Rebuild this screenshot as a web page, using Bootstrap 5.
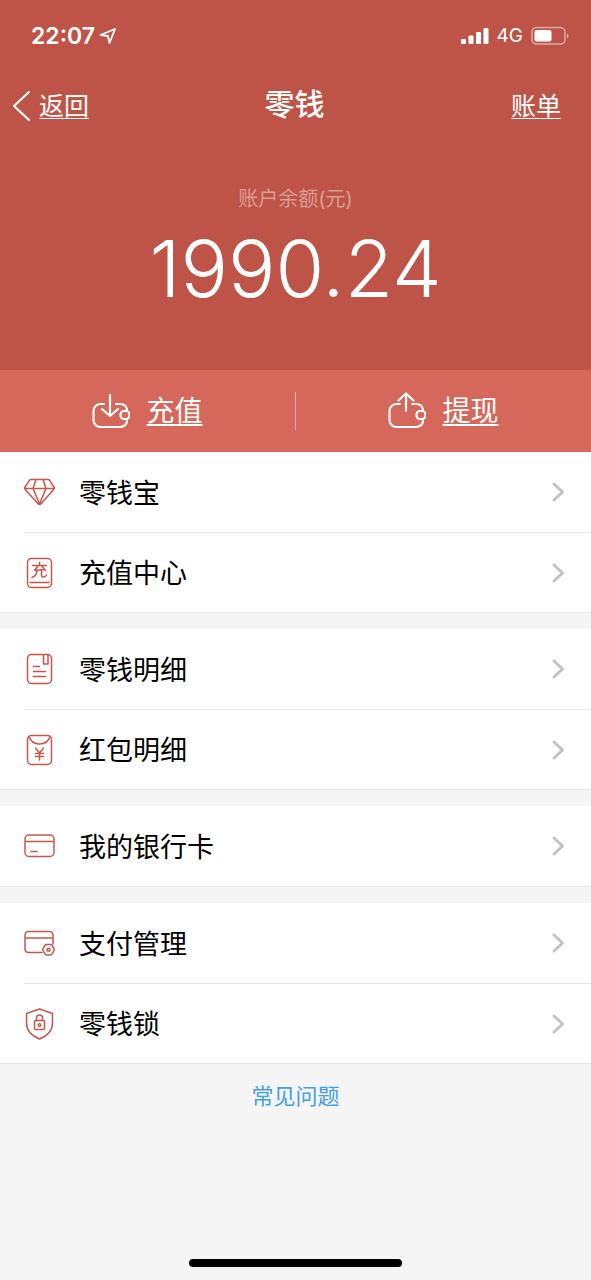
<!DOCTYPE html>
<html lang="zh-CN">
<head>
<meta charset="utf-8">
<meta name="viewport" content="width=device-width, initial-scale=1">
<title>零钱</title>
<link href="https://cdn.jsdelivr.net/npm/bootstrap@5.3.0/dist/css/bootstrap.min.css" rel="stylesheet">
<style>
  body { background: #f5f5f5; font-family: "Inter", "Noto Sans CJK SC", sans-serif; color: #000; }
  svg { fill: none; stroke: currentColor; stroke-linecap: round; stroke-linejoin: round; flex: none; display: block; }
  .hero { background: #bd5447; color: #fff; padding-bottom: 48px; }
  .status { height: 72px; padding: 0 22px 0 31px; }
  .clock { font-size: 23px; font-weight: 600; }
  .net { font-size: 19px; }
  .topbar { height: 64px; padding: 0 30px 0 12px; }
  .topbar a { font-size: 25px; line-height: 36px; }
  .topbar h1 { font-size: 30px; line-height: 36px; font-weight: 500; }
  .topbar .col { padding-top: 4px; }
  .under { text-decoration: underline; text-underline-offset: 3px; text-decoration-thickness: 1px; }
  .caption { font-size: 20px; line-height: 30px; color: #dd9c94; padding-top: 48px; }
  .amount { font-size: 79px; line-height: 108px; font-weight: 300; }
  .actions { background: #d5685a; height: 82px; }
  .actions a { font-size: 28px; line-height: 40px; }
  .actions .under { text-decoration-thickness: 2px; }
  .rule { width: 1px; height: 38px; background: #e9aaa1; }
  .entries { background: #fff; border-bottom: 1px solid #e6e6e6; }
  .entries + .entries { margin-top: 16px; }
  .entry { height: 80px; margin-left: 24px; padding-right: 26px; font-size: 27px; color: #000; }
  .entry + .entry { border-top: 1px solid #e6e6e6; }
  .entry span { padding-top: 4px; }
  .entry .glyph { color: #c9564a; margin-right: 23px; }
  .entry .next { color: #c2c2c2; }
  .faq { font-size: 22px; line-height: 32px; color: #479fe4; margin-top: 16px; }
  .homebar { width: 36%; height: 8px; background: #000; margin-bottom: 13px; }
</style>
</head>
<body class="min-vh-100 d-flex flex-column">
<header class="hero">
  <div class="status d-flex align-items-center justify-content-between">
    <div class="d-flex align-items-center gap-1">
      <span class="clock">22:07</span>
      <svg width="18" height="18" viewBox="0 0 18 18" stroke-width="1.800"><path d="M1.500 8 16 2 10.500 16 9 9Z"/></svg>
    </div>
    <div class="d-flex align-items-center gap-2">
      <svg width="28" height="18" viewBox="0 0 28 18"><g fill="currentColor" stroke="none"><rect x="0" y="12" width="5" height="5" rx="1"/><rect x="7.500" y="8.500" width="5" height="8.500" rx="1"/><rect x="15" y="5" width="5" height="12" rx="1"/><rect x="22.500" y="1" width="5" height="16" rx="1"/></g></svg>
      <span class="net">4G</span>
      <svg width="38" height="20" viewBox="0 0 38 20"><rect x="1" y="1.500" width="33" height="16.500" rx="4.500" stroke-opacity=".5" stroke-width="1.500"/><rect x="3.500" y="4" width="17" height="11.500" rx="2" fill="currentColor" stroke="none"/><path d="M36 7.500c2 1 2 4 0 5Z" fill="currentColor" stroke="none" opacity=".55"/></svg>
    </div>
  </div>
  <nav class="topbar row g-0 align-items-center" aria-label="导航">
    <div class="col">
      <a href="#" class="d-flex align-items-center gap-2 text-white text-decoration-none">
        <svg width="19" height="32" viewBox="0 0 19 32" stroke-width="2.200"><path d="M17 2 2 16l15 14"/></svg>
        <span class="under">返回</span>
      </a>
    </div>
    <h1 class="col-auto m-0 ps-3">零钱</h1>
    <div class="col text-end"><a href="#" class="under text-white">账单</a></div>
  </nav>
  <div class="caption text-center">账户余额(元)</div>
  <div class="amount text-center">1990.24</div>
</header>
<main>
  <div class="actions d-flex align-items-center">
    <a href="#" class="col d-flex align-items-center justify-content-center gap-3 text-white text-decoration-none">
      <svg width="38" height="38" viewBox="0 0 38 38" stroke-width="2.200"><path d="M12 12H8a7 7 0 0 0-6.500 7v9a7 7 0 0 0 7 7h19c4 0 7-2 7.500-6M24 12h4c4 0 6.500 2.500 7 6M18 3v20M10 17l8 7 8-7"/><rect x="28.500" y="19" width="9" height="8" rx="3.500"/></svg>
      <span class="under">充值</span>
    </a>
    <div class="rule"></div>
    <a href="#" class="col d-flex align-items-center justify-content-center gap-3 text-white text-decoration-none">
      <svg width="38" height="38" viewBox="0 0 38 38" stroke-width="2.200"><path d="M12 12H8a7 7 0 0 0-6.500 7v9a7 7 0 0 0 7 7h19c4 0 7-2 7.500-6M24 12h4c4 0 6.500 2.500 7 6M18 19V2M10.500 8.500 18 1.500l7.500 7"/><rect x="28.500" y="19" width="9" height="8" rx="3.500"/></svg>
      <span class="under">提现</span>
    </a>
  </div>

  <div class="entries">
    <a href="#" class="entry d-flex align-items-center text-decoration-none">
      <svg class="glyph" width="32" height="32" viewBox="0 0 32 32" stroke-width="1.500"><path d="M7 3.500h17q1 0 1.600.8L30 11q.8 1.200-.3 2.500L17 27.800q-1.500 1.400-3 0L1.300 13.500Q.2 12.200 1 11L5.400 4.300Q6 3.500 7 3.500ZM1 12.500h29M12 3.500 9 12.500l6.500 15.500L22 12.500l-3-9"/></svg>
      <span>零钱宝</span>
      <svg class="next ms-auto" width="14" height="22" viewBox="0 0 14 22" stroke-width="3"><path d="m3 3 8.500 8L3 19"/></svg>
    </a>
    <a href="#" class="entry d-flex align-items-center text-decoration-none">
      <svg class="glyph" width="32" height="32" viewBox="0 0 32 32" stroke-width="1.500"><rect x="3.500" y="1.500" width="24" height="29" rx="4"/><path d="M6 25.500h19M15.500 5.500v3M8.500 8.500h14M14 9l-3.500 4.500 9.500-1M18 9.500l3.500 4M13 13c0 4-1 6-5 7.500M17.500 13v5q0 2 2 2t3-2"/></svg>
      <span>充值中心</span>
      <svg class="next ms-auto" width="14" height="22" viewBox="0 0 14 22" stroke-width="3"><path d="m3 3 8.500 8L3 19"/></svg>
    </a>
  </div>

  <div class="entries">
    <a href="#" class="entry d-flex align-items-center text-decoration-none">
      <svg class="glyph" width="32" height="32" viewBox="0 0 32 32" stroke-width="1.500"><rect x="3.500" y="1.500" width="24" height="29" rx="4"/><path d="M19.500 2v9h4.500V2M9.500 13.500h6M9.500 18.500h12M9.500 23.500h12"/></svg>
      <span>零钱明细</span>
      <svg class="next ms-auto" width="14" height="22" viewBox="0 0 14 22" stroke-width="3"><path d="m3 3 8.500 8L3 19"/></svg>
    </a>
    <a href="#" class="entry d-flex align-items-center text-decoration-none">
      <svg class="glyph" width="32" height="32" viewBox="0 0 32 32" stroke-width="1.500"><rect x="3.500" y="1.500" width="24" height="29" rx="4"/><path d="M5 2.500c3 10 18 10 21 0M11.500 14l4 5 4-5M15.500 19v7M11.500 19.500h8M11.500 22.500h8"/></svg>
      <span>红包明细</span>
      <svg class="next ms-auto" width="14" height="22" viewBox="0 0 14 22" stroke-width="3"><path d="m3 3 8.500 8L3 19"/></svg>
    </a>
  </div>

  <div class="entries">
    <a href="#" class="entry d-flex align-items-center text-decoration-none">
      <svg class="glyph" width="32" height="32" viewBox="0 0 32 32" stroke-width="1.500"><rect x="1" y="5" width="29" height="21.500" rx="4"/><path d="M2 11.500h27M7 21.500h6"/></svg>
      <span>我的银行卡</span>
      <svg class="next ms-auto" width="14" height="22" viewBox="0 0 14 22" stroke-width="3"><path d="m3 3 8.500 8L3 19"/></svg>
    </a>
  </div>

  <div class="entries">
    <a href="#" class="entry d-flex align-items-center text-decoration-none">
      <svg class="glyph" width="32" height="32" viewBox="0 0 32 32" stroke-width="1.500"><path d="M18 25.500H4.500A3.500 3.500 0 0 1 1 22V8a3.500 3.500 0 0 1 3.500-3.500h21A3.500 3.500 0 0 1 29 8v9M2 11h26"/><path d="M22.500 17.500h4q1 0 1.600 1l1.900 3.200q.5 1 0 2l-1.900 3.200q-.6 1-1.600 1h-4q-1 0-1.600-1L19 23.700q-.5-1 0-2l1.900-3.200q.6-1 1.600-1Z"/><circle cx="24.500" cy="22.700" r="1.500"/></svg>
      <span>支付管理</span>
      <svg class="next ms-auto" width="14" height="22" viewBox="0 0 14 22" stroke-width="3"><path d="m3 3 8.500 8L3 19"/></svg>
    </a>
    <a href="#" class="entry d-flex align-items-center text-decoration-none">
      <svg class="glyph" width="32" height="32" viewBox="0 0 32 32" stroke-width="1.500"><path d="M15.500 1 28.500 5.500V15c0 7.500-4.500 12.500-13 16C7 27.500 2.500 22.500 2.500 15V5.500Z"/><rect x="10.500" y="12.500" width="10" height="9" rx="1"/><path d="M12.500 12.500V10a3 3 0 0 1 6 0v2.500"/><circle cx="15.500" cy="17" r="1.300"/></svg>
      <span>零钱锁</span>
      <svg class="next ms-auto" width="14" height="22" viewBox="0 0 14 22" stroke-width="3"><path d="m3 3 8.500 8L3 19"/></svg>
    </a>
  </div>
  <div class="text-center"><a href="#" class="faq d-inline-block text-decoration-none">常见问题</a></div>
</main>
<div class="homebar rounded-pill mx-auto mt-auto"></div>
<script src="https://cdn.jsdelivr.net/npm/bootstrap@5.3.0/dist/js/bootstrap.bundle.min.js"></script>
</body>
</html>
